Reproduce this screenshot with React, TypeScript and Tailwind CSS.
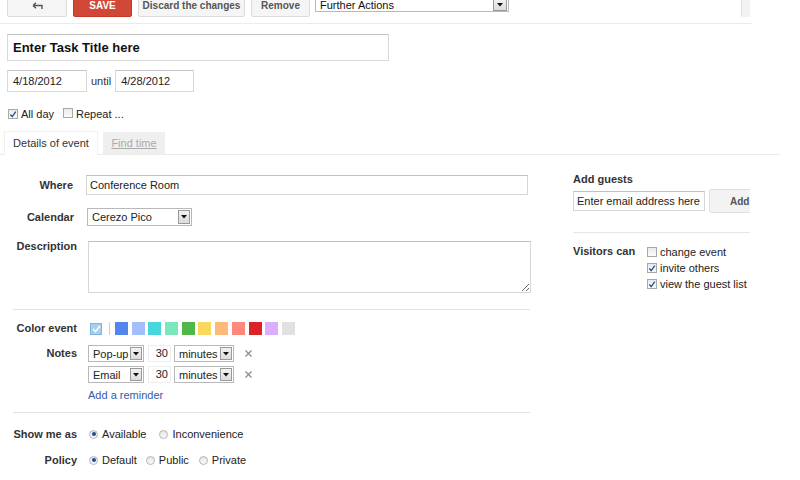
import type { ReactNode } from "react";

function Check({ checked }: { checked?: boolean }) {
  return (
    <span className="inline-flex h-[10px] w-[10px] shrink-0 items-center justify-center border border-[#a7a7a7] bg-gradient-to-b from-[#eaeaea] to-[#fbfbfb]">
      {checked && (
        <svg width="9" height="9" viewBox="0 0 9 9">
          <path d="M1.5 4.5 L3.6 7 L7.6 1.2" fill="none" stroke="#2f4a91" strokeWidth="1.4" />
        </svg>
      )}
    </span>
  );
}

function Radio({ on }: { on?: boolean }) {
  return (
    <span className="inline-flex h-[9px] w-[9px] shrink-0 items-center justify-center rounded-full border border-[#b5b5b5] bg-gradient-to-b from-[#e6e6e6] to-[#fafafa]">
      {on && <span className="h-[4px] w-[4px] rounded-full bg-[#1d4c9e]" />}
    </span>
  );
}

function Arrow({ w = 12 }: { w?: number }) {
  return (
    <span
      className="flex shrink-0 items-center justify-center border border-[#9a9a9a] bg-gradient-to-b from-[#f2f2f2] to-[#dcdcdc]"
      style={{ width: w }}
    >
      <svg width="6" height="4" viewBox="0 0 6 4">
        <path d="M0 0 H6 L3 3.5 Z" fill="#111" />
      </svg>
    </span>
  );
}

function Select({ children, className }: { children: ReactNode; className: string }) {
  return (
    <div className={`flex border border-[#b8b8b8] bg-white p-px ${className}`}>
      <span className="flex-1 truncate pl-[3px] leading-[15px]">{children}</span>
      <Arrow />
    </div>
  );
}

function XIcon() {
  return (
    <svg width="7" height="7" viewBox="0 0 7 7" className="ml-[11px]">
      <path d="M0.5 0.5 L6.5 6.5 M6.5 0.5 L0.5 6.5" stroke="#8a8a8a" strokeWidth="1.2" />
    </svg>
  );
}

const swatches = [
  "#5484ed",
  "#a4bdfc",
  "#46d6db",
  "#7ae7bf",
  "#51b749",
  "#fbd75b",
  "#ffb878",
  "#ff887c",
  "#dc2127",
  "#dbadff",
  "#e1e1e1",
];

function Label({ children, pr = "pr-0" }: { children: ReactNode; pr?: string }) {
  return <div className={`w-[64px] shrink-0 text-right font-bold text-[#333] ${pr}`}>{children}</div>;
}

export default function App() {
  return (
    <div className="h-[480px] w-[800px] overflow-hidden bg-white font-['Liberation_Sans',Arial,sans-serif] text-[11px] leading-[13px] text-[#222]">
      {/* toolbar */}
      <div className="relative flow-root h-[24px] w-[752px] border-b border-[#ebebeb]">
        <div className="-mt-[6px] flex items-start pl-[7px]">
          <button className="flex h-[23px] w-[60px] items-center justify-center rounded-[2px] border border-[#dcdcdc] bg-[#f5f5f5]">
            <svg width="11" height="8" viewBox="0 0 11 8">
              <path d="M1 3.5 L4 0.8 M1 3.5 L4 6.2 M1 3.5 H10 V7" fill="none" stroke="#555" strokeWidth="1.4" />
            </svg>
          </button>
          <button className="ml-[6px] flex h-[23px] w-[59px] items-center justify-center rounded-[2px] border border-[#c53727] bg-[#d14836] text-[10px] font-bold text-white">
            SAVE
          </button>
          <button className="ml-[6px] flex h-[23px] w-[107px] items-center justify-center rounded-[2px] border border-[#dcdcdc] bg-[#f5f5f5] text-[10px] font-bold text-[#555]">
            Discard the changes
          </button>
          <button className="ml-[6px] flex h-[23px] w-[59px] items-center justify-center rounded-[2px] border border-[#dcdcdc] bg-[#f5f5f5] text-[10px] font-bold text-[#555]">
            Remove
          </button>
          <div className="mt-[2px] ml-[5px] flex h-[16px] w-[194px] border border-[#b8b8b8] bg-white pt-px pr-px">
            <span className="flex-1 pl-[4px] leading-[15px] text-[11px] text-[#111]">Further Actions</span>
            <Arrow w={14} />
          </div>
        </div>
        <div className="absolute top-0 left-[741px] h-[17px] w-[9px] border-l border-[#e2e2e2] bg-[#f3f3f3]" />
      </div>

      {/* title */}
      <div className="mt-[10px] ml-[7px] flex h-[27px] w-[382px] items-center border border-[#d9d9d9] border-t-[#c4c4c4] pl-[5px] text-[13px] font-bold text-[#111]">
        Enter Task Title here
      </div>

      {/* dates */}
      <div className="mt-[9px] ml-[7px] flex h-[22px] items-center">
        <div className="flex h-[22px] w-[80px] items-center border border-[#d9d9d9] border-t-[#c4c4c4] pl-[5px]">4/18/2012</div>
        <span className="ml-[4px] text-[#333]">until</span>
        <div className="ml-[4px] flex h-[22px] w-[79px] items-center border border-[#d9d9d9] border-t-[#c4c4c4] pl-[5px]">4/28/2012</div>
      </div>

      {/* all day / repeat */}
      <div className="mt-[15px] ml-[8px] flex h-[14px] items-center">
        <Check checked />
        <span className="ml-[3px]">All day</span>
        <span className="ml-[9px]">
          <Check />
        </span>
        <span className="ml-[3px]">Repeat ...</span>
      </div>

      {/* tabs */}
      <div className="mt-[10px] flex h-[24px] w-[780px] items-end border-b border-[#ebebeb] pl-[4px]">
        <div className="-mb-px flex h-[24px] w-[94px] items-center justify-center border border-b-0 border-[#f0f0f0] bg-white text-[#333]">
          Details of event
        </div>
        <div className="ml-[5px] flex h-[22px] w-[62px] items-center justify-center bg-[#efefef] text-[#aaa] underline">
          Find time
        </div>
      </div>

      <div className="flex">
        {/* left column */}
        <div className="ml-[13px] w-[518px] pt-[20px]">
          <div className="flex h-[20px] items-center">
            <Label pr="pr-[4px]">Where</Label>
            <div className="ml-[9px] flex h-[20px] w-[442px] items-center border border-[#d6d6d6] border-t-[#c0c0c0] pl-[3px]">
              Conference Room
            </div>
          </div>

          <div className="mt-[13px] flex h-[18px] items-center">
            <Label pr="pr-[3px]">Calendar</Label>
            <Select className="ml-[10px] h-[18px] w-[105px]">Cerezo Pico</Select>
          </div>

          <div className="mt-[15px] flex items-start">
            <div className="-mt-[1px]">
              <Label>Description</Label>
            </div>
            <textarea
              readOnly
              className="ml-[11px] h-[52px] w-[443px] border border-[#d6d6d6] border-t-[#c0c0c0] outline-none"
            />
          </div>

          <div className="mt-[16px] w-[517px] border-t border-[#e2e2e2]" />

          <div className="mt-[12px] flex h-[13px] items-center">
            <Label>Color event</Label>
            <span className="ml-[13px] flex h-[12px] w-[12px] items-center justify-center border border-[#7fb2dd] bg-[#a6d0f0]">
              <svg width="9" height="8" viewBox="0 0 9 8">
                <path d="M1 4 L3.5 6.5 L8 1" fill="none" stroke="#fff" strokeWidth="1.6" />
              </svg>
            </span>
            <span className="ml-[7px] h-[13px] w-px bg-[#cfcfcf]" />
            <div className="ml-[5px] flex gap-[3.7px]">
              {swatches.map((c) => (
                <span key={c} className="h-[13px] w-[13px]" style={{ background: c }} />
              ))}
            </div>
          </div>

          <div className="mt-[10px] flex h-[17px] items-center">
            <Label>Notes</Label>
            <Select className="ml-[11px] h-[17px] w-[56px]">Pop-up</Select>
            <div className="ml-[4px] flex h-[17px] w-[23px] items-center justify-end border border-[#eeeeee] pr-[2px]">30</div>
            <Select className="ml-[3px] h-[17px] w-[60px]">minutes</Select>
            <XIcon />
          </div>
          <div className="mt-[4px] flex h-[17px] items-center">
            <Label>{""}</Label>
            <Select className="ml-[11px] h-[17px] w-[56px]">Email</Select>
            <div className="ml-[4px] flex h-[17px] w-[23px] items-center justify-end border border-[#eeeeee] pr-[2px]">30</div>
            <Select className="ml-[3px] h-[17px] w-[60px]">minutes</Select>
            <XIcon />
          </div>
          <div className="mt-[6px] ml-[75px] h-[12px] leading-[12px] text-[#2f5bab]">Add a reminder</div>

          <div className="mt-[11px] w-[517px] border-t border-[#e2e2e2]" />

          <div className="mt-[14px] flex h-[14px] items-center">
            <Label>Show me as</Label>
            <span className="ml-[12px] flex items-center">
              <Radio on />
              <span className="ml-[4px]">Available</span>
            </span>
            <span className="ml-[13px] flex items-center">
              <Radio />
              <span className="ml-[4px]">Inconvenience</span>
            </span>
          </div>

          <div className="mt-[12px] flex h-[14px] items-center">
            <Label>Policy</Label>
            <span className="ml-[12px] flex items-center">
              <Radio on />
              <span className="ml-[4px]">Default</span>
            </span>
            <span className="ml-[9px] flex items-center">
              <Radio />
              <span className="ml-[4px]">Public</span>
            </span>
            <span className="ml-[10px] flex items-center">
              <Radio />
              <span className="ml-[4px]">Private</span>
            </span>
          </div>
        </div>

        {/* right column */}
        <div className="ml-[42px] w-[177px] overflow-hidden pt-[18px]">
          <div className="font-bold text-[#333]">Add guests</div>
          <div className="mt-[3px] flex items-center">
            <div className="flex h-[20px] w-[132px] shrink-0 items-center border border-[#d6d6d6] border-t-[#c0c0c0] pl-[3px]">
              Enter email address here
            </div>
            <div className="ml-[4px] flex h-[24px] w-[50px] shrink-0 items-center rounded-[2px] border border-[#e0e0e0] bg-[#f3f3f3] pl-[20px] text-[10px] font-bold text-[#555]">
              Add
            </div>
          </div>
          <div className="mt-[19px] w-[179px] border-t border-[#e6e6e6]" />
          <div className="mt-[11px] flex">
            <div className="w-[74px] pt-[1px] font-bold text-[#333]">Visitors can</div>
            <div className="flex flex-col">
              <div className="flex h-[16px] items-center">
                <Check />
                <span className="ml-[3px]">change event</span>
              </div>
              <div className="flex h-[16px] items-center">
                <Check checked />
                <span className="ml-[3px]">invite others</span>
              </div>
              <div className="flex h-[16px] items-center">
                <Check checked />
                <span className="ml-[3px]">view the guest list</span>
              </div>
            </div>
          </div>
        </div>
      </div>
    </div>
  );
}
